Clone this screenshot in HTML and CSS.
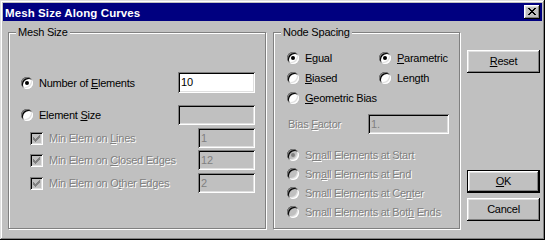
FILE: index.html
```html
<!DOCTYPE html>
<html>
<head>
<meta charset="utf-8">
<title>Mesh Size Along Curves</title>
<link rel="stylesheet" href="styles.css">
</head>
<body>
<div class="window">
  <div class="titlebar">
    <span class="title">Mesh Size Along Curves</span>
    <span class="close"><svg width="8" height="7" viewBox="0 0 8 7"><path d="M0 0h2v1H0zM6 0h2v1H6zM1 1h2v1H1zM5 1h2v1H5zM2 2h4v1H2zM3 3h2v1H3zM2 4h4v1H2zM1 5h2v1H1zM5 5h2v1H5zM0 6h2v1H0zM6 6h2v1H6z" fill="#000"/></svg></span>
  </div>
  <div class="content">
    <div class="group mesh">
      <span class="legend">Mesh Size</span>
      <div class="row r1">
        <span class="opt"><span class="radio on"></span><span class="txt">Number of <u>E</u>lements</span></span>
        <span class="field wide">10</span>
      </div>
      <div class="row r2">
        <span class="opt"><span class="radio"></span><span class="txt">Element <u>S</u>ize</span></span>
        <span class="field wide off"></span>
      </div>
      <div class="row r3 sub">
        <span class="opt dis"><span class="check"><svg width="7" height="7" viewBox="0 0 7 7"><path d="M6 0h1v1H6zM5 1h2v1H5zM0 2h1v1H0zM4 2h3v1H4zM0 3h2v1H0zM3 3h3v1H3zM0 4h5v1H0zM1 5h3v1H1zM2 6h1v1H2z" fill="#808080"/></svg></span><span class="txt">Min Elem on <u>L</u>ines</span></span>
        <span class="field narrow off">1</span>
      </div>
      <div class="row r4 sub">
        <span class="opt dis"><span class="check"><svg width="7" height="7" viewBox="0 0 7 7"><path d="M6 0h1v1H6zM5 1h2v1H5zM0 2h1v1H0zM4 2h3v1H4zM0 3h2v1H0zM3 3h3v1H3zM0 4h5v1H0zM1 5h3v1H1zM2 6h1v1H2z" fill="#808080"/></svg></span><span class="txt">Min Elem on <u>C</u>losed Edges</span></span>
        <span class="field narrow off">12</span>
      </div>
      <div class="row r5 sub">
        <span class="opt dis"><span class="check"><svg width="7" height="7" viewBox="0 0 7 7"><path d="M6 0h1v1H6zM5 1h2v1H5zM0 2h1v1H0zM4 2h3v1H4zM0 3h2v1H0zM3 3h3v1H3zM0 4h5v1H0zM1 5h3v1H1zM2 6h1v1H2z" fill="#808080"/></svg></span><span class="txt">Min Elem on O<u>t</u>her Edges</span></span>
        <span class="field narrow off">2</span>
      </div>
    </div>

    <div class="group node">
      <span class="legend">Node Spacing</span>
      <div class="spacing">
        <span class="opt"><span class="radio on"></span><span class="txt">E<u>g</u>ual</span></span>
        <span class="opt"><span class="radio on"></span><span class="txt"><u>P</u>arametric</span></span>
        <span class="opt"><span class="radio"></span><span class="txt"><u>B</u>iased</span></span>
        <span class="opt"><span class="radio"></span><span class="txt">Length</span></span>
        <span class="opt span2"><span class="radio"></span><span class="txt"><u>G</u>eometric Bias</span></span>
      </div>
      <div class="row bias">
        <span class="opt dis"><span class="txt">Bias <u>F</u>actor</span></span>
        <span class="field bf off">1.</span>
      </div>
      <div class="smalls">
        <span class="opt dis"><span class="radio off on"></span><span class="txt">S<u>m</u>all Elements at Start</span></span>
        <span class="opt dis"><span class="radio off"></span><span class="txt">Sm<u>a</u>ll Elements at End</span></span>
        <span class="opt dis"><span class="radio off"></span><span class="txt">Small Elements at Ce<u>n</u>ter</span></span>
        <span class="opt dis"><span class="radio off"></span><span class="txt">Small Elements at Bot<u>h</u> Ends</span></span>
      </div>
    </div>

    <div class="buttons">
      <span class="btn reset"><span class="txt"><u>R</u>eset</span></span>
      <span class="btn ok default"><span class="txt"><u>O</u>K</span></span>
      <span class="btn cancel"><span class="txt">Cancel</span></span>
    </div>
  </div>
</div>
</body>
</html>
```

FILE: styles.css
```css
* { box-sizing: border-box; }
html, body { margin: 0; padding: 0; }
body {
  width: 545px;
  height: 240px;
  overflow: hidden;
  background: #c0c0c0;
  font-family: "Liberation Sans", Arial, sans-serif;
  font-size: 11px;
  color: #000;
}
u { text-decoration-thickness: 1px; text-underline-offset: 1px; }
.txt { white-space: pre; letter-spacing: -0.25px; }
.legend { letter-spacing: -0.2px; }

.window {
  width: 545px;
  height: 240px;
  padding: 3px;
  background: #c0c0c0;
  box-shadow: inset -1px -1px #000, inset 1px 1px #dfdfdf, inset -2px -2px #808080, inset 2px 2px #fff;
  display: flex;
  flex-direction: column;
}

.titlebar {
  height: 18px;
  background: #000080;
  display: flex;
  align-items: center;
  justify-content: space-between;
  padding: 0 2px 0 2px;
}
.title {
  color: #fff;
  font-weight: bold;
  font-size: 11.5px;
  letter-spacing: 0.1px;
  padding-top: 1px;
}
.close {
  width: 16px;
  height: 14px;
  background: #c0c0c0;
  box-shadow: inset -1px -1px #000, inset 1px 1px #fff, inset -2px -2px #808080, inset 2px 2px #dfdfdf;
  display: flex;
  align-items: center;
  justify-content: center;
  padding: 0 1px 1px 0;
}
.close svg { display: block; }

.content {
  display: flex;
  gap: 7px;
  padding: 11px 0 0 5px;
}

.group {
  height: 197px;
  border: 1px solid #808080;
  box-shadow: 1px 1px 0 #fff, inset 1px 1px 0 #fff;
  display: flex;
  flex-direction: column;
}
.mesh { width: 258px; }
.node { width: 187px; }

.legend {
  align-self: flex-start;
  height: 13px;
  line-height: 13px;
  margin: -7px 0 0 7px;
  padding: 0 2px;
  background: #c0c0c0;
}

.row {
  display: flex;
  align-items: center;
  justify-content: space-between;
  height: 20px;
  padding: 0 10px 0 12px;
}
.r1 { margin-top: 33px; height: 21px; }
.r2 { margin-top: 12px; }
.r3 { margin-top: 3px; }
.r4 { margin-top: 2px; }
.r5 { margin-top: 3px; }
.sub { padding-left: 21px; }

.opt {
  display: flex;
  align-items: center;
  white-space: nowrap;
}
.dis {
  color: #808080;
  text-shadow: 1px 1px 0 #fff;
}
.dis u { text-decoration-color: #808080; }

.radio {
  position: relative;
  flex: none;
  width: 12px;
  height: 12px;
  margin-right: 6px;
  border-radius: 50%;
  background: #fff;
  box-shadow: inset 1px 1px #808080, inset -1px -1px #fff, inset 2px 2px #000, inset -2px -2px #dfdfdf;
}
.radio.on::after {
  content: "";
  position: absolute;
  left: 4px;
  top: 4px;
  width: 4px;
  height: 4px;
  border-radius: 50%;
  background: #000;
}
.radio.off { background: #c0c0c0; }
.radio.off.on::after { background: #808080; }

.check {
  flex: none;
  width: 13px;
  height: 13px;
  margin-right: 6px;
  background: #c0c0c0;
  box-shadow: inset 1px 1px #808080, inset -1px -1px #fff, inset 2px 2px #000, inset -2px -2px #dfdfdf;
  display: flex;
  padding: 3px;
}
.check svg { display: block; }

.field {
  height: 100%;
  background: #fff;
  box-shadow: inset 1px 1px #808080, inset -1px -1px #fff, inset 2px 2px #000, inset -2px -2px #dfdfdf;
  display: flex;
  align-items: center;
  padding: 0 3px 1px 3px;
}
.field.off { background: #c0c0c0; color: #808080; }
.wide { width: 77px; }
.narrow { width: 57px; }
.bf { width: 81px; }

.spacing {
  display: grid;
  grid-template-columns: 92px auto;
  grid-auto-rows: 20px;
  align-items: center;
  margin-top: 9px;
  padding-left: 13px;
}
.span2 { grid-column: 1 / 3; }

.bias {
  margin-top: 6px;
  padding: 0 10px 0 14px;
}

.smalls {
  display: grid;
  grid-auto-rows: 19px;
  align-items: center;
  margin-top: 11px;
  padding-left: 13px;
}

.buttons {
  width: 73px;
  display: flex;
  flex-direction: column;
  padding-top: 18px;
}
.btn {
  height: 23px;
  background: #c0c0c0;
  box-shadow: inset -1px -1px #000, inset 1px 1px #fff, inset -2px -2px #808080, inset 2px 2px #dfdfdf;
  display: flex;
  align-items: center;
  justify-content: center;
  padding-bottom: 1px;
}
.default { border: 1px solid #000; }
.ok { margin-top: 97px; }
.cancel { margin-top: 5px; }
```
